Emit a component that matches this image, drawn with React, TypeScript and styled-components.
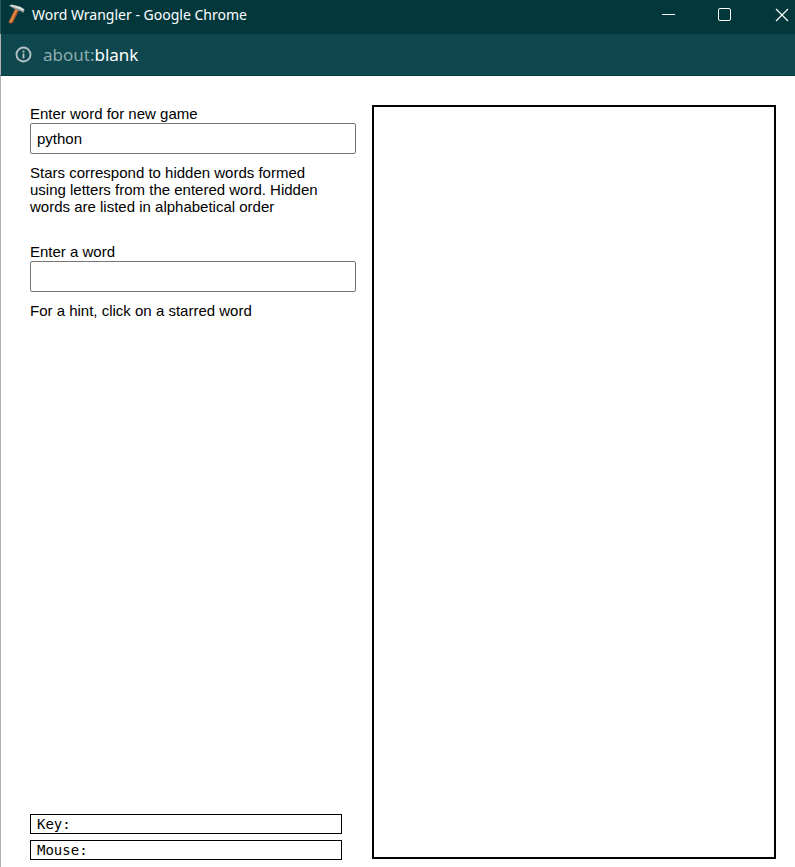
import React, { useState } from 'react';
import styled, { createGlobalStyle } from 'styled-components';

const GlobalStyle = createGlobalStyle`
  *, *::before, *::after { box-sizing: border-box; }
  body { margin: 0; background: #fff; }
`;

const Window = styled.div`
  display: flex;
  flex-direction: column;
  min-height: 100vh;
  font-family: 'Liberation Sans', Arial, sans-serif;
  color: #000;
`;

const TitleBar = styled.header`
  display: flex;
  align-items: center;
  height: 34px;
  padding: 0 0 4px 7px;
  border-left: 1px solid #2b5a60;
  background: #02383c;
`;

const Title = styled.h1`
  flex: 1;
  margin: 0 0 0 7px;
  font: 400 14px/20px 'Noto Sans', 'Open Sans', sans-serif;
  color: #fff;
`;

const WindowButton = styled.button<{ $last?: boolean }>`
  display: flex;
  align-items: center;
  justify-content: ${p => (p.$last ? 'flex-end' : 'center')};
  width: ${p => (p.$last ? 42 : 56)}px;
  height: 30px;
  padding: ${p => (p.$last ? '0 6px 0 0' : '0')};
  border: 0;
  background: transparent;
`;

const AddressBar = styled.div`
  display: flex;
  align-items: center;
  gap: 11px;
  height: 42px;
  padding-left: 13px;
  border-left: 1px solid #b0b0b0;
  border-bottom: 1px solid #033b42;
  background: #0e474d;
  font: 400 17px/24px 'Noto Sans', 'Open Sans', sans-serif;
  color: #8fabae;
`;

const Host = styled.span`
  color: #fff;
`;

const Page = styled.main`
  flex: 1;
  display: flex;
  gap: 16px;
  padding: 29px 19px 7px 29px;
  border-left: 1px solid #b0b0b0;
`;

const Panel = styled.div`
  display: flex;
  flex-direction: column;
  flex: 0 1 326px;
`;

const Group = styled.section`
  margin-bottom: 28px;
  font-size: 15px;
  line-height: 17px;
`;

const Label = styled.label`
  display: block;
  padding-bottom: 1px;
`;

const Field = styled.input`
  display: block;
  width: 100%;
  height: 31px;
  padding: 0 6px;
  border: 1px solid #767676;
  border-radius: 2px;
  background: #fff;
  font: inherit;
  color: #000;
  outline: none;
`;

const Note = styled.p`
  max-width: 300px;
  margin: 10px 0 0;
`;

const StatusList = styled.div`
  display: flex;
  flex-direction: column;
  gap: 6px;
  margin: auto 14px 0 0;
`;

const Status = styled.div`
  height: 20px;
  padding: 0 6px;
  border: 1px solid #000;
  font: 14px/18px 'DejaVu Sans Mono', monospace;
`;

const Board = styled.div`
  flex: 1;
  margin-bottom: 1px;
  border: 2px solid #000;
`;

const HammerIcon = () => (
  <svg width="17" height="22" viewBox="0 0 17 22" aria-hidden="true">
    <path d="M7.2 4.5 11.2 6 5 18.6 Q3 20.6 0.4 18.6Z" fill="#a95326" />
    <path d="M7.6 5 9.8 5.6 3.6 18.6 1.2 18Z" fill="#df8545" />
    <path d="M1 1.8 3.5 0.4 12 2.4 16.6 5.2 15.6 8.8 10.6 6.6 6 4.8Z" fill="#929c9d" />
    <path d="M1.6 1.6 4 0.8 12 3 16.2 5.4 15.6 6.8 10.5 4.8Z" fill="#dfe2e1" />
  </svg>
);

const InfoIcon = () => (
  <svg width="18" height="18" viewBox="0 0 18 18" fill="none" aria-hidden="true">
    <circle cx="9.5" cy="8.5" r="7" stroke="#b4c1c4" strokeWidth="1.9" />
    <path d="M9.5 7.5v5M9.5 4.6v1.8" stroke="#b4c1c4" strokeWidth="1.8" />
  </svg>
);

export default function App() {
  const [source, setSource] = useState('python');
  const [guess, setGuess] = useState('');

  return (
    <Window>
      <GlobalStyle />
      <TitleBar>
        <HammerIcon />
        <Title>Word Wrangler - Google Chrome</Title>
        <WindowButton aria-label="Minimize">
          <svg width="14" height="14" viewBox="0 0 14 14">
            <path d="M0 6.5h13" stroke="#fff" />
          </svg>
        </WindowButton>
        <WindowButton aria-label="Maximize">
          <svg width="14" height="14" viewBox="0 0 14 14">
            <rect x="0.5" y="0.5" width="12" height="12" rx="1.5" fill="none" stroke="#fff" />
          </svg>
        </WindowButton>
        <WindowButton $last aria-label="Close">
          <svg width="14" height="14" viewBox="0 0 14 14">
            <path d="M1 1l12 12M13 1L1 13" stroke="#fff" strokeWidth="1.2" />
          </svg>
        </WindowButton>
      </TitleBar>
      <AddressBar>
        <InfoIcon />
        <span>about:<Host>blank</Host></span>
      </AddressBar>
      <Page>
        <Panel>
          <Group>
            <Label htmlFor="source">Enter word for new game</Label>
            <Field id="source" value={source} onChange={e => setSource(e.target.value)} />
            <Note>
              Stars correspond to hidden words formed using letters from the entered word. Hidden
              words are listed in alphabetical order
            </Note>
          </Group>
          <Group>
            <Label htmlFor="guess">Enter a word</Label>
            <Field id="guess" value={guess} onChange={e => setGuess(e.target.value)} />
            <Note>For a hint, click on a starred word</Note>
          </Group>
          <StatusList>
            <Status>Key:</Status>
            <Status>Mouse:</Status>
          </StatusList>
        </Panel>
        <Board />
      </Page>
    </Window>
  );
}
